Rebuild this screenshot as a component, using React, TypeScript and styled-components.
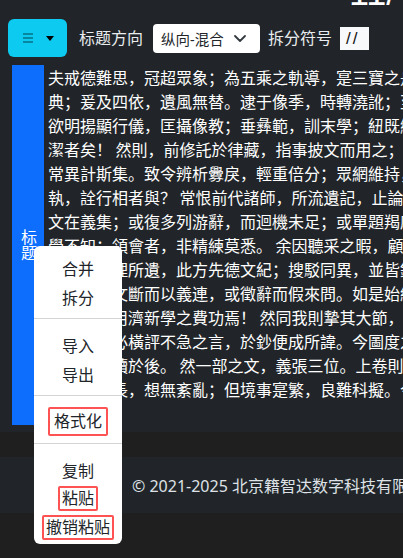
import React from "react"
import styled, { createGlobalStyle } from "styled-components"

const GlobalStyle = createGlobalStyle`
  html, body {
    margin: 0;
    padding: 0;
    background: #1f1f1f;
    overflow: hidden;
  }
  body {
    font-family: "Noto Sans", "Noto Sans CJK SC", sans-serif;
  }
`

const Page = styled.div`
  position: relative;
  width: 572px;
  min-height: 558px;
`
const Main = styled.div`
  background: #212529;
  padding-bottom: 7px;
`
const PageTitle = styled.div`
  height: 11px;
  overflow: hidden;
  padding-left: 349px;
  color: #fff;
  font: 36px/36px "Liberation Sans", sans-serif;
`
const PageTitleText = styled.div`
  margin-top: -25px;
  white-space: nowrap;
`
const Toolbar = styled.div`
  display: flex;
  align-items: center;
  height: 38px;
  margin-top: 8px;
  padding-left: 8px;
`
const MenuButton = styled.button`
  display: flex;
  align-items: center;
  gap: 13px;
  width: 59px;
  height: 38px;
  padding: 0 0 0 15px;
  border: none;
  border-radius: 6px;
  background: #0dcaf0;
`
const Label = styled.span<{ $left: number; $right: number }>`
  margin: 0 ${(p) => p.$right}px 0 ${(p) => p.$left}px;
  color: #e9ecef;
  font-size: 16px;
  line-height: 24px;
  white-space: nowrap;
`
const Select = styled.div`
  display: flex;
  align-items: center;
  justify-content: space-between;
  box-sizing: border-box;
  width: 107px;
  height: 29px;
  padding: 0 14px 0 8px;
  border-radius: 4px;
  background: #fff;
  color: #212529;
  font-size: 14.5px;
  white-space: nowrap;
`
const SymbolInput = styled.div`
  box-sizing: border-box;
  width: 29px;
  height: 23px;
  padding-left: 6px;
  background: #f8f9fa;
  color: #111;
  font: 17px/23px "Liberation Sans", sans-serif;
  letter-spacing: 2px;
`
const Body = styled.div`
  display: flex;
  gap: 4px;
  height: 360px;
  margin-top: 8px;
  padding-left: 12px;
`
const Side = styled.div`
  display: flex;
  align-items: center;
  justify-content: center;
  flex: 0 0 32px;
  background: #0d6efd;
  color: #fff;
  font-size: 16px;
  line-height: 16px;
  writing-mode: vertical-rl;
`
const TextColumn = styled.div`
  flex: 1;
  overflow: hidden;
  color: #fff;
  font-family: "Noto Sans CJK SC", sans-serif;
  font-size: 16px;
  line-height: 24px;
`
const Line = styled.div`
  white-space: nowrap;
`
const Footer = styled.div`
  display: flex;
  align-items: center;
  justify-content: center;
  height: 56px;
  margin-top: 25px;
  background: #212529;
  color: #dee2e6;
  font-size: 16px;
  white-space: nowrap;
`
const ContextMenu = styled.div`
  position: absolute;
  left: 34px;
  top: 246px;
  width: 88px;
  padding: 7px 0 2px;
  border-radius: 6px;
  background: #fff;
`
const MenuItem = styled.div`
  display: flex;
  align-items: center;
  justify-content: center;
  height: 29px;
  color: #212529;
  font-size: 16px;
`
const Divider = styled.div`
  height: 1px;
  margin: 7px 0 11px;
  background: #d4d4d4;
`
const Mark = styled.span<{ $loose?: boolean }>`
  padding: ${(p) => (p.$loose ? "2px 4px" : "0 2px")};
  border: 2px solid #ff5252;
  border-radius: 2px;
  line-height: 21px;
`

const lines = [
  "夫戒德難思，冠超眾象；為五乘之軌導，寔三寶之舟航。故能",
  "典；爰及四依，遺風無替。逮于像季，時轉澆訛；至使",
  "欲明揚顯行儀，匡攝像教；垂彝範，訓末學；紐既絕之",
  "潔者矣！ 然則，前修託於律藏，指事披文而用之；但",
  "常異計斯集。致令辨析釁戾，輕重倍分；眾網維持，各",
  "執，詮行相者與？ 常恨前代諸師，所流遺記，止論文",
  "文在義集；或復多列游辭，而迴機未足；或單題羯磨，",
  "學不知；領會者，非精練莫悉。 余因聽采之暇，顧眄",
  "兼錄諸家理所遺，此方先德文紀；搜駁同異，並皆錄之",
  "或有所述文斷而以義連，或徵辭而假來問。如是始終",
  "冀將來者用濟新學之費功焉！ 然同我則摯其大節，",
  "異我者則必橫評不急之言，於鈔便成所諱。今圖度之",
  "庶無煩追贖於後。 然一部之文，義張三位。上卷則明",
  "委悉其短長，想無紊亂；但境事寔繁，良難科擬。今",
]

function BarsIcon() {
  return (
    <svg width="10" height="10" viewBox="0 0 10 10">
      <g stroke="#087f97" strokeWidth="1.8">
        <line x1="0" y1="1" x2="10" y2="1" />
        <line x1="0" y1="5" x2="10" y2="5" />
        <line x1="0" y1="9" x2="10" y2="9" />
      </g>
    </svg>
  )
}

function Caret() {
  return (
    <svg width="8" height="5" viewBox="0 0 8 5">
      <path d="M0 0h8L4 5z" fill="#000" />
    </svg>
  )
}

function Chevron() {
  return (
    <svg width="12" height="7" viewBox="0 0 12 7">
      <path d="M1 1l5 5 5-5" fill="none" stroke="#343a40" strokeWidth="1.8" strokeLinecap="round" strokeLinejoin="round" />
    </svg>
  )
}

export default function App() {
  return (
    <Page>
      <GlobalStyle />
      <Main>
        <PageTitle>
          <PageTitleText>11/</PageTitleText>
        </PageTitle>
        <Toolbar>
          <MenuButton>
            <BarsIcon />
            <Caret />
          </MenuButton>
          <Label $left={12} $right={10}>标题方向</Label>
          <Select>
            <span>纵向-混合</span>
            <Chevron />
          </Select>
          <Label $left={8} $right={8}>拆分符号</Label>
          <SymbolInput>//</SymbolInput>
        </Toolbar>
        <Body>
          <Side>标题</Side>
          <TextColumn>
            {lines.map((l, i) => (
              <Line key={i}>{l}</Line>
            ))}
          </TextColumn>
        </Body>
      </Main>
      <Footer>© 2021-2025 北京籍智达数字科技有限公司</Footer>
      <ContextMenu>
        <MenuItem>合并</MenuItem>
        <MenuItem>拆分</MenuItem>
        <Divider />
        <MenuItem>导入</MenuItem>
        <MenuItem>导出</MenuItem>
        <Divider />
        <MenuItem>
          <Mark $loose>格式化</Mark>
        </MenuItem>
        <Divider />
        <MenuItem>复制</MenuItem>
        <MenuItem>
          <Mark>粘贴</Mark>
        </MenuItem>
        <MenuItem>
          <Mark>撤销粘贴</Mark>
        </MenuItem>
      </ContextMenu>
    </Page>
  )
}
